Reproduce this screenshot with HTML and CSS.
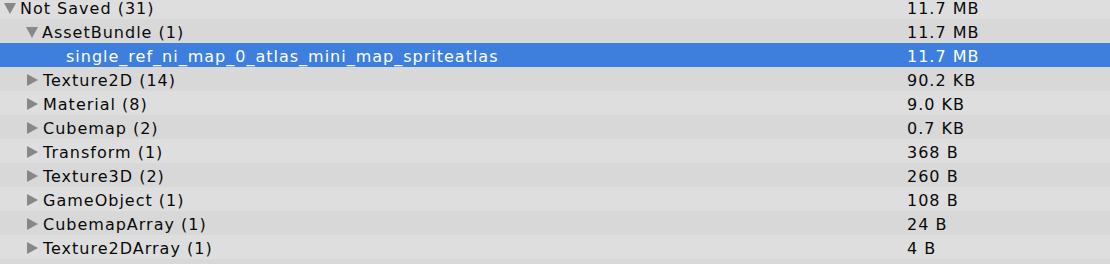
FILE: index.html
```html
<!DOCTYPE html>
<html>
<head>
<meta charset="utf-8">
<link rel="stylesheet" href="styles.css">
</head>
<body>
<div class="tree">
  <div class="row light"><div class="name"><span class="arrow down"></span>Not Saved (31)</div><div class="size">11.7 MB</div></div>
  <div class="row dark l1"><div class="name"><span class="arrow down"></span>AssetBundle (1)</div><div class="size">11.7 MB</div></div>
  <div class="row sel l2"><div class="name">single_ref_ni_map_0_atlas_mini_map_spriteatlas</div><div class="size">11.7 MB</div></div>
  <div class="row dark l1"><div class="name"><span class="arrow right"></span>Texture2D (14)</div><div class="size">90.2 KB</div></div>
  <div class="row light l1"><div class="name"><span class="arrow right"></span>Material (8)</div><div class="size">9.0 KB</div></div>
  <div class="row dark l1"><div class="name"><span class="arrow right"></span>Cubemap (2)</div><div class="size">0.7 KB</div></div>
  <div class="row light l1"><div class="name"><span class="arrow right"></span>Transform (1)</div><div class="size">368 B</div></div>
  <div class="row dark l1"><div class="name"><span class="arrow right"></span>Texture3D (2)</div><div class="size">260 B</div></div>
  <div class="row light l1"><div class="name"><span class="arrow right"></span>GameObject (1)</div><div class="size">108 B</div></div>
  <div class="row dark l1"><div class="name"><span class="arrow right"></span>CubemapArray (1)</div><div class="size">24 B</div></div>
  <div class="row light l1"><div class="name"><span class="arrow right"></span>Texture2DArray (1)</div><div class="size">4 B</div></div>
</div>
</body>
</html>
```
FILE: styles.css
```css
html, body {
  margin: 0;
  padding: 0;
  background: #d8d8d8;
  overflow: hidden;
}
.tree {
  margin-top: -5px;
  font-family: "DejaVu Sans", Verdana, sans-serif;
  font-size: 16px;
  letter-spacing: 1px;
  color: #0a0a0a;
}
.row {
  display: flex;
  height: 24px;
  line-height: 20px;
  padding-top: 4px;
  box-sizing: border-box;
  white-space: nowrap;
}
.light { background: #dedede; }
.dark { background: #d8d8d8; }
.sel { background: #3e7fdd; color: #ffffff; }
.name {
  width: 907px;
  height: 20px;
  display: flex;
  align-items: center;
  padding-left: 4px;
  box-sizing: border-box;
}
.l1 .name { padding-left: 26px; }
.l2 .name { padding-left: 66px; }
.arrow {
  flex: none;
  width: 0;
  height: 0;
}
.arrow.down {
  border-left: 6px solid transparent;
  border-right: 6px solid transparent;
  border-top: 11px solid #888888;
  margin-right: 4px;
  margin-top: -2px;
}
.arrow.right {
  border-top: 6.5px solid transparent;
  border-bottom: 6.5px solid transparent;
  border-left: 11px solid #888888;
  margin-left: 1px;
  margin-right: 5px;
  margin-top: -2px;
}
.size {
  flex: 1;
  height: 20px;
}
```
